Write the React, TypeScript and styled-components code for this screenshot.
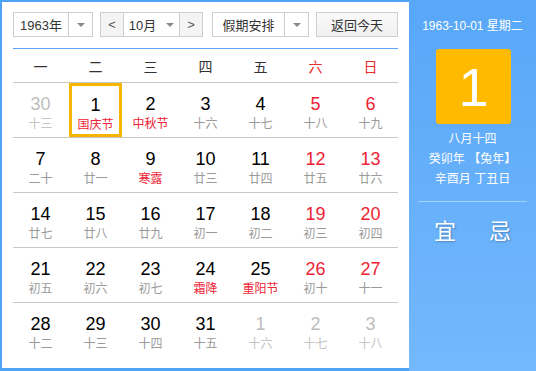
import styled, { createGlobalStyle } from 'styled-components';

const GlobalStyle = createGlobalStyle`
  html, body {
    margin: 0;
    padding: 0;
    background: #ffffff;
  }
  body {
    font-family: "Liberation Sans", "Noto Sans CJK SC", sans-serif;
  }
`;

type Day = { n: number; lunar: string; other?: boolean; weekend?: boolean; fest?: boolean; today?: boolean };

const weeks: Day[][] = [
  [
    { n: 30, lunar: '十三', other: true },
    { n: 1, lunar: '国庆节', fest: true, today: true },
    { n: 2, lunar: '中秋节', fest: true },
    { n: 3, lunar: '十六' },
    { n: 4, lunar: '十七' },
    { n: 5, lunar: '十八', weekend: true },
    { n: 6, lunar: '十九', weekend: true },
  ],
  [
    { n: 7, lunar: '二十' },
    { n: 8, lunar: '廿一' },
    { n: 9, lunar: '寒露', fest: true },
    { n: 10, lunar: '廿三' },
    { n: 11, lunar: '廿四' },
    { n: 12, lunar: '廿五', weekend: true },
    { n: 13, lunar: '廿六', weekend: true },
  ],
  [
    { n: 14, lunar: '廿七' },
    { n: 15, lunar: '廿八' },
    { n: 16, lunar: '廿九' },
    { n: 17, lunar: '初一' },
    { n: 18, lunar: '初二' },
    { n: 19, lunar: '初三', weekend: true },
    { n: 20, lunar: '初四', weekend: true },
  ],
  [
    { n: 21, lunar: '初五' },
    { n: 22, lunar: '初六' },
    { n: 23, lunar: '初七' },
    { n: 24, lunar: '霜降', fest: true },
    { n: 25, lunar: '重阳节', fest: true },
    { n: 26, lunar: '初十', weekend: true },
    { n: 27, lunar: '十一', weekend: true },
  ],
  [
    { n: 28, lunar: '十二' },
    { n: 29, lunar: '十三' },
    { n: 30, lunar: '十四' },
    { n: 31, lunar: '十五' },
    { n: 1, lunar: '十六', other: true },
    { n: 2, lunar: '十七', other: true },
    { n: 3, lunar: '十八', other: true },
  ],
];

const weekdays = ['一', '二', '三', '四', '五', '六', '日'];

const Root = styled.div`
  display: flex;
  width: 536px;
  height: 371px;
  overflow: hidden;
`;

const Main = styled.div`
  box-sizing: border-box;
  width: 409px;
  height: 371px;
  background: #ffffff;
  border-left: 2px solid #4fa2f6;
  border-top: 2px solid #4fa2f6;
  border-bottom: 3px solid #4fa2f6;
  padding: 10px 11px 0 11px;
`;

const Toolbar = styled.div`
  display: flex;
  align-items: center;
  height: 25px;
`;

const Select = styled.div<{ $w: number; $gap?: number }>`
  box-sizing: border-box;
  display: flex;
  width: ${p => p.$w}px;
  height: 25px;
  margin-right: ${p => p.$gap ?? 0}px;
  border: 1px solid #cfcfcf;
  background: #ffffff;
`;

const SelectText = styled.div`
  flex: 1;
  display: flex;
  align-items: center;
  justify-content: center;
  font-size: 13px;
  color: #333333;
`;

const Arrow = styled.div`
  width: 23px;
  border-left: 1px solid #cfcfcf;
  display: flex;
  align-items: center;
  justify-content: center;
  &::after {
    content: '';
    border-left: 4px solid transparent;
    border-right: 4px solid transparent;
    border-top: 4px solid #8a8a8a;
  }
`;

const InlineArrow = styled.span`
  margin-left: 10px;
  border-left: 4px solid transparent;
  border-right: 4px solid transparent;
  border-top: 4px solid #8a8a8a;
`;

const NavButton = styled.div<{ $side: 'left' | 'right' }>`
  width: 22px;
  background: #f4f4f4;
  border-${p => (p.$side === 'left' ? 'right' : 'left')}: 1px solid #cfcfcf;
  display: flex;
  align-items: center;
  justify-content: center;
  color: #555555;
  font-size: 13px;
`;

const TodayButton = styled.div`
  box-sizing: border-box;
  width: 82px;
  height: 25px;
  margin-left: auto;
  border: 1px solid #cfcfcf;
  background: linear-gradient(#fafafa, #f0f0f0);
  display: flex;
  align-items: center;
  justify-content: center;
  font-size: 13px;
  color: #333333;
`;

const Grid = styled.div`
  margin-top: 11px;
  border-top: 1px solid #5aa8f5;
  width: 385px;
`;

const HeadRow = styled.div`
  display: grid;
  grid-template-columns: repeat(7, 55px);
  height: 33px;
  align-items: center;
  border-bottom: 1px solid #c8c8c8;
`;

const HeadCell = styled.div<{ $red?: boolean }>`
  text-align: center;
  font-size: 14px;
  color: ${p => (p.$red ? '#ee2a2a' : '#333333')};
`;

const WeekRow = styled.div<{ $last?: boolean }>`
  display: grid;
  grid-template-columns: repeat(7, 55px);
  height: 54px;
  border-bottom: ${p => (p.$last ? 'none' : '1px solid #c8c8c8')};
`;

const Cell = styled.div<{ $today?: boolean }>`
  box-sizing: border-box;
  display: flex;
  flex-direction: column;
  align-items: center;
  padding-top: ${p => (p.$today ? '8px' : '10px')};
  margin: 0 1px;
  border: ${p => (p.$today ? '3px solid #f7b500' : 'none')};
`;

const Num = styled.div<{ $tone: 'normal' | 'red' | 'muted' }>`
  font-size: 18px;
  line-height: 22px;
  color: ${p => (p.$tone === 'red' ? '#ee2233' : p.$tone === 'muted' ? '#bdbdbd' : '#000000')};
`;

const Lunar = styled.div<{ $tone: 'normal' | 'fest' | 'muted' }>`
  font-size: 12px;
  line-height: 16px;
  margin-top: 1px;
  color: ${p => (p.$tone === 'fest' ? '#ee2233' : p.$tone === 'muted' ? '#c4c4c4' : '#9a9a9a')};
`;

const Side = styled.div`
  flex: 1;
  height: 371px;
  background: linear-gradient(#58a7f8, #74b8fd);
  display: flex;
  flex-direction: column;
  align-items: center;
  color: #ffffff;
`;

const DateLine = styled.div`
  margin-top: 17px;
  font-size: 12px;
  line-height: 18px;
`;

const BigDay = styled.div`
  margin-top: 14px;
  margin-left: 2px;
  width: 75px;
  height: 75px;
  border-radius: 3px;
  background: #ffba00;
  display: flex;
  align-items: center;
  justify-content: center;
  font-size: 54px;
  font-family: "Liberation Sans", sans-serif;
`;

const Info = styled.div`
  margin-top: 5px;
  font-size: 12px;
  line-height: 20px;
  text-align: center;
`;

const Divider = styled.div`
  margin-top: 12px;
  width: 109px;
  height: 1px;
  background: #a6d1fb;
`;

const Omens = styled.div`
  margin-top: 11px;
  display: flex;
  gap: 33px;
  font-size: 22px;
  text-shadow: 1px 1px 2px rgba(0, 0, 0, 0.25);
`;

export default function App() {
  return (
    <Root>
      <GlobalStyle />
      <Main>
        <Toolbar>
          <Select $w={80} $gap={7}>
            <SelectText>1963年</SelectText>
            <Arrow />
          </Select>
          <Select $w={103} $gap={9}>
            <NavButton $side="left">&lt;</NavButton>
            <SelectText>
              10月<InlineArrow />
            </SelectText>
            <NavButton $side="right">&gt;</NavButton>
          </Select>
          <Select $w={97}>
            <SelectText>假期安排</SelectText>
            <Arrow />
          </Select>
          <TodayButton>返回今天</TodayButton>
        </Toolbar>
        <Grid>
          <HeadRow>
            {weekdays.map((w, i) => (
              <HeadCell key={w} $red={i >= 5}>
                {w}
              </HeadCell>
            ))}
          </HeadRow>
          {weeks.map((week, wi) => (
            <WeekRow key={wi} $last={wi === weeks.length - 1}>
              {week.map((d, di) => (
                <Cell key={di} $today={d.today}>
                  <Num $tone={d.other ? 'muted' : d.weekend ? 'red' : 'normal'}>{d.n}</Num>
                  <Lunar $tone={d.other ? 'muted' : d.fest ? 'fest' : 'normal'}>{d.lunar}</Lunar>
                </Cell>
              ))}
            </WeekRow>
          ))}
        </Grid>
      </Main>
      <Side>
        <DateLine>1963-10-01 星期二</DateLine>
        <BigDay>1</BigDay>
        <Info>
          八月十四
          <br />
          癸卯年 【兔年】
          <br />
          辛酉月 丁丑日
        </Info>
        <Divider />
        <Omens>
          <span>宜</span>
          <span>忌</span>
        </Omens>
      </Side>
    </Root>
  );
}
